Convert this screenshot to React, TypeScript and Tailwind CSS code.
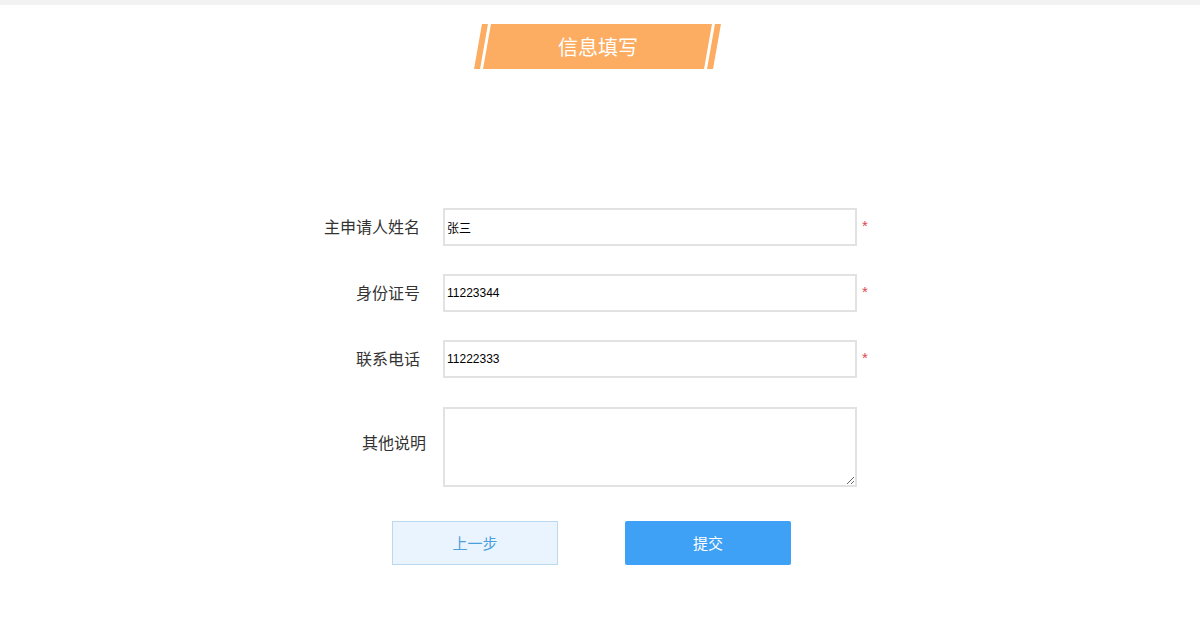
export default function App() {
  const font = { fontFamily: '"Noto Sans CJK SC", "Liberation Sans", sans-serif' }
  const rows = [
    { label: '主申请人姓名', value: '张三' },
    { label: '身份证号', value: '11223344' },
    { label: '联系电话', value: '11222333' },
  ]

  return (
    <div className="min-h-screen w-full bg-white" style={font}>
      {/* top strip */}
      <div className="h-[5px] bg-[#f2f2f2]" />

      {/* banner */}
      <div className="mt-[19px] flex justify-center">
        <div className="ml-[-5px] flex h-[45px] items-stretch gap-[3px]">
          <div className="w-[6px] -skew-x-[10deg] bg-[#fdad62]" />
          <div className="flex w-[221px] -skew-x-[10deg] items-center justify-center bg-[#fdad62]">
            <span className="skew-x-[10deg] text-[20px] leading-none text-white">信息填写</span>
          </div>
          <div className="w-[6px] -skew-x-[10deg] bg-[#fdad62]" />
        </div>
      </div>

      {/* form */}
      <div className="ml-[300px] mt-[139px] flex flex-col gap-[28px]">
        {rows.map((r) => (
          <div key={r.label} className="flex items-center">
            <label className="mr-[23px] w-[120px] pb-[2px] text-right text-[16px] leading-none text-[#333]">
              {r.label}
            </label>
            <input
              defaultValue={r.value}
              className="h-[38px] w-[414px] border-2 border-[#e2e2e2] bg-white px-[2px] text-[12px] text-black outline-none"
              style={{ fontFamily: '"Liberation Sans", "Noto Sans CJK SC", sans-serif' }}
            />
            <span
              className="ml-[5px] pb-[4px] text-[15px] leading-none text-[#e0474c]"
              style={{ fontFamily: '"Liberation Sans", sans-serif' }}
            >
              *
            </span>
          </div>
        ))}

        <div className="mt-[1px] flex items-start">
          <label className="mr-[17px] mt-[27px] w-[126px] text-right text-[16px] leading-none text-[#333]">
            其他说明
          </label>
          <textarea className="h-[80px] w-[414px] border-2 border-[#e2e2e2] bg-white px-[2px] text-[12px] outline-none" />
        </div>
      </div>

      {/* buttons */}
      <div className="ml-[392px] mt-[34px] flex gap-[67px]">
        <button className="h-[44px] w-[166px] border border-[#bcd8ef] bg-[#eaf4fe] text-[15px] text-[#4a9fdc]">
          上一步
        </button>
        <button className="h-[44px] w-[166px] rounded-[2px] bg-[#3ea1f6] text-[15px] text-white">
          提交
        </button>
      </div>
    </div>
  )
}
